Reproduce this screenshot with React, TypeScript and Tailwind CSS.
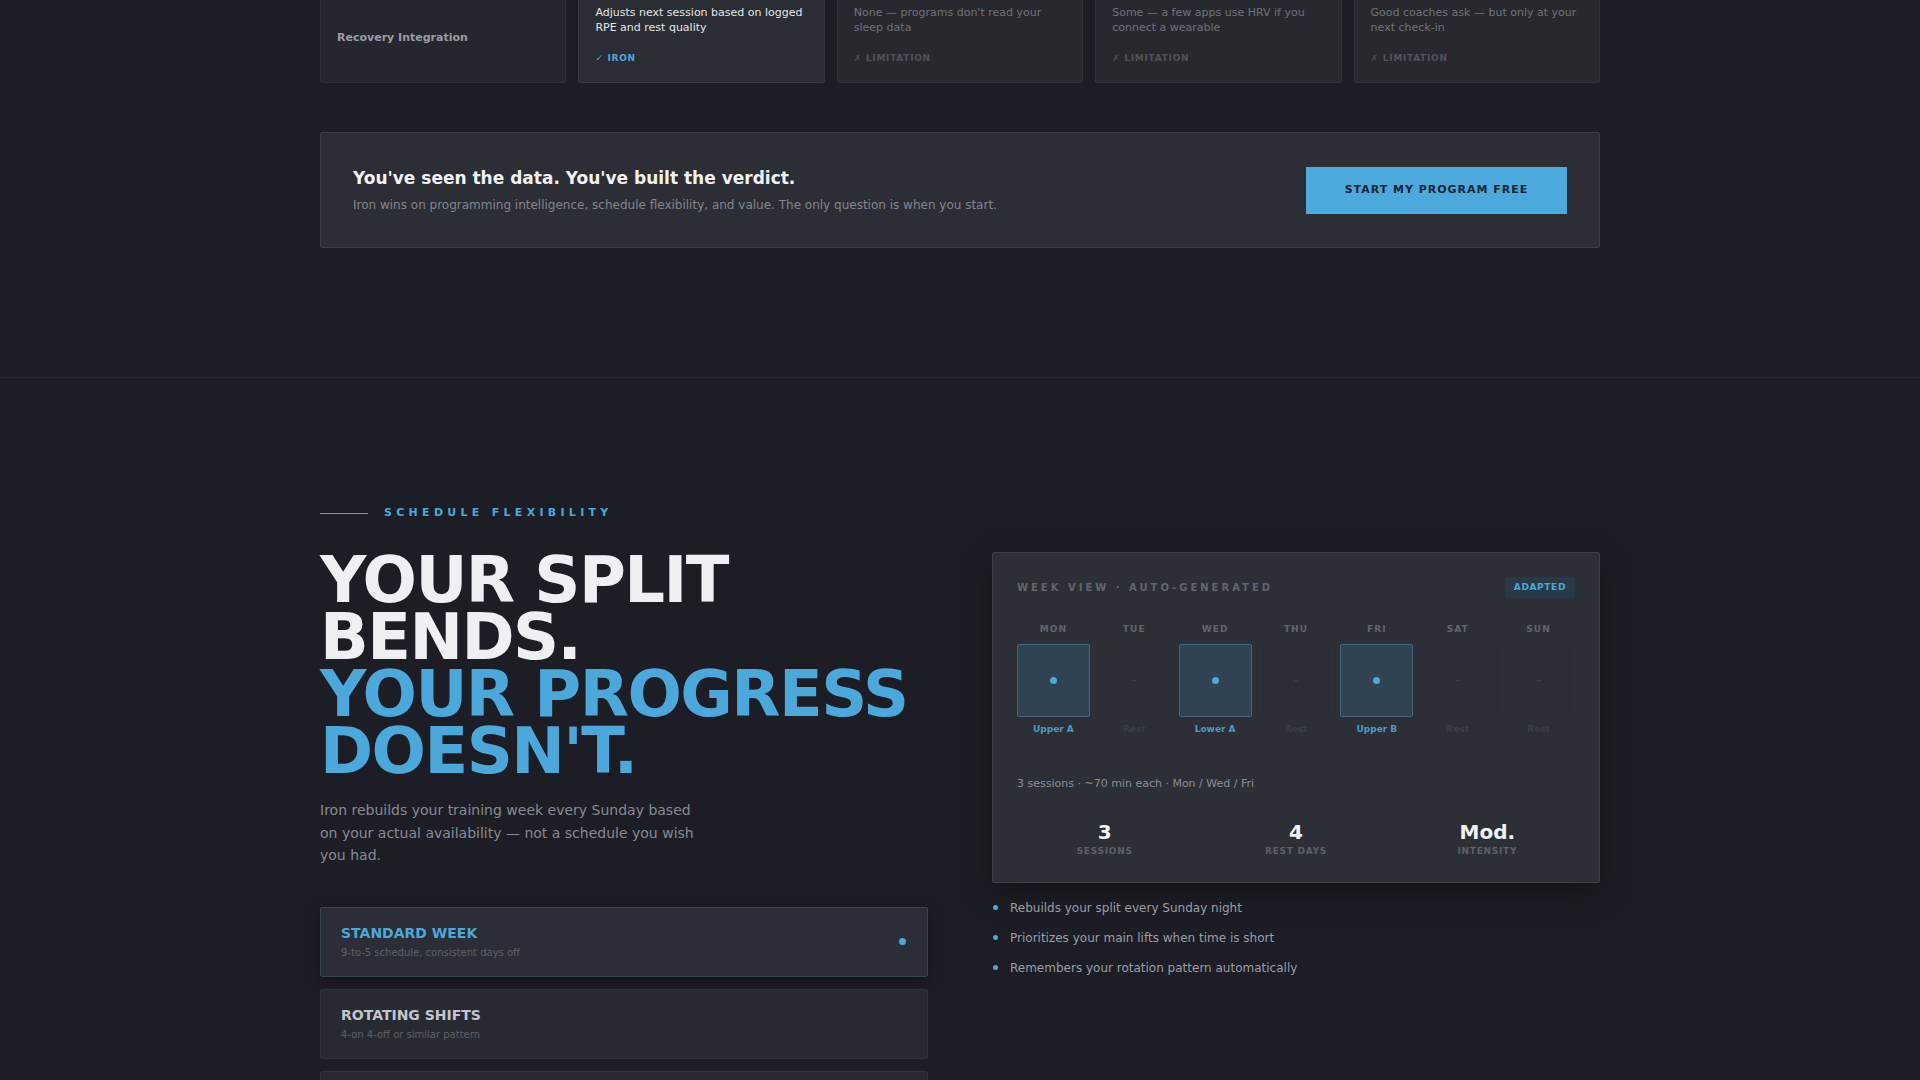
import React from "react";

const compare = [
  { text: "Adjusts next session based on logged RPE and rest quality", iron: true },
  { text: "None — programs don't read your sleep data", iron: false },
  { text: "Some — a few apps use HRV if you connect a wearable", iron: false },
  { text: "Good coaches ask — but only at your next check-in", iron: false },
];

const days = [
  { d: "MON", label: "Upper A", on: true },
  { d: "TUE", label: "Rest", on: false },
  { d: "WED", label: "Lower A", on: true },
  { d: "THU", label: "Rest", on: false },
  { d: "FRI", label: "Upper B", on: true },
  { d: "SAT", label: "Rest", on: false },
  { d: "SUN", label: "Rest", on: false },
];

const modes = [
  { title: "STANDARD WEEK", sub: "9-to-5 schedule, consistent days off", active: true },
  { title: "ROTATING SHIFTS", sub: "4-on 4-off or similar pattern", active: false },
  { title: "UNPREDICTABLE", sub: "Travel, on-call, or changing hours", active: false },
];

const perks = [
  "Rebuilds your split every Sunday night",
  "Prioritizes your main lifts when time is short",
  "Remembers your rotation pattern automatically",
];

export default function App() {
  return (
    <div className="min-h-screen bg-[#1d1e25] font-['DejaVu_Sans',sans-serif] text-[#e6e7ea] overflow-hidden">
      {/* comparison tail + verdict */}
      <div className="mx-auto w-[1280px]">
        <div className="-mt-3 grid grid-cols-5 gap-3">
          <div className="flex items-center rounded-[2px] border border-[#30333a] bg-[#25272e] px-4 pt-[6px]">
            <span className="text-[11px] font-bold text-[#9a9ca3]">Recovery Integration</span>
          </div>
          {compare.map((c, i) => (
            <div
              key={i}
              className={`rounded-[2px] border px-4 pt-4 pb-[17px] ${
                c.iron ? "border-[#363941] bg-[#2b2d34]" : "border-[#30333a] bg-[#27292f]"
              }`}
            >
              <p className={`text-[11px] leading-[15px] ${c.iron ? "text-[#e3e5e8]" : "text-[#6f727a]"}`}>{c.text}</p>
              <p
                className={`mt-[17px] text-[9px] font-bold tracking-[0.08em] leading-[13px] ${
                  c.iron ? "text-[#4ba8db]" : "text-[#50535b]"
                }`}
              >
                {c.iron ? "✓ IRON" : "✗ LIMITATION"}
              </p>
            </div>
          ))}
        </div>

        <div className="mt-[49px] flex items-center justify-between rounded-[2px] border border-[#3a3d45] bg-[#2c2e35] px-8 h-[116px]">
          <div className="pb-[1px]">
            <h3 className="text-[17px] font-bold leading-6 text-[#f1f2f4]">You've seen the data. You've built the verdict.</h3>
            <p className="mt-[7px] text-xs text-[#82858d]">
              Iron wins on programming intelligence, schedule flexibility, and value. The only question is when you start.
            </p>
          </div>
          <button className="h-[47px] w-[261px] bg-[#4ba9dc] text-[11px] font-bold tracking-[0.09em] text-[#172433]">
            START MY PROGRAM FREE
          </button>
        </div>
      </div>

      <div className="mt-[129px] border-t border-[#25272e]" />

      {/* schedule flexibility */}
      <section className="mx-auto w-[1280px] pt-[127px]">
        <div className="flex items-center gap-4">
          <span className="h-px w-12 bg-[#4ba8db]" />
          <span className="text-[11px] font-bold tracking-[0.39em] text-[#4ba8db] leading-4">SCHEDULE FLEXIBILITY</span>
        </div>

        <div className="mt-[31px] grid grid-cols-2 gap-16">
          <div>
            <h2 className="text-[64px] font-bold leading-[57px] tracking-[-0.024em]">
              <span className="block text-[#eef0f3]">YOUR SPLIT</span>
              <span className="block text-[#eef0f3]">BENDS.</span>
              <span className="block text-[#4ba8db]">YOUR PROGRESS</span>
              <span className="block text-[#4ba8db]">DOESN'T.</span>
            </h2>
            <p className="mt-[19px] max-w-[385px] text-sm leading-[22.5px] text-[#878a92]">
              Iron rebuilds your training week every Sunday based on your actual availability — not a schedule you wish you had.
            </p>

            <div className="mt-[40px] flex flex-col gap-3">
              {modes.map((m) => (
                <div
                  key={m.title}
                  className={`flex h-[70px] items-center justify-between rounded-[2px] border px-5 ${
                    m.active
                      ? "border-[#38444f] bg-[#2b2e36] shadow-[0_4px_14px_rgba(0,0,0,0.35)]"
                      : "border-[#30333a] bg-[#282a31]"
                  }`}
                >
                  <div>
                    <div className={`text-sm font-bold leading-5 ${m.active ? "text-[#4ba8db]" : "text-[#c3c5ca]"}`}>{m.title}</div>
                    <div className="mt-[3px] text-[10px] leading-[14px] text-[#5d6068]">{m.sub}</div>
                  </div>
                  {m.active && <span className="mr-[1px] h-[7px] w-[7px] rounded-full bg-[#4ba8db]" />}
                </div>
              ))}
            </div>
          </div>

          <div>
            <div className="rounded-[2px] border border-[#3c3f47] bg-[#2c2f36] px-6 pt-6 pb-[25px] shadow-[0_10px_30px_rgba(0,0,0,0.35)]">
              <div className="flex items-center justify-between h-[21px]">
                <span className="text-[10px] font-bold tracking-[0.3em] text-[#62656d]">WEEK VIEW · AUTO-GENERATED</span>
                <span className="rounded-[2px] bg-[#273a48] px-[9px] py-[4px] text-[9px] font-bold leading-[13px] tracking-[0.07em] text-[#4ba8db]">
                  ADAPTED
                </span>
              </div>

              <div className="mt-[25px] grid grid-cols-7 gap-2">
                {days.map((d) => (
                  <div key={d.d} className="flex flex-col items-center">
                    <span className="text-[9px] font-bold leading-3 tracking-[0.12em] text-[#62656d]">{d.d}</span>
                    <div
                      className={`mt-[9px] flex aspect-square w-full items-center justify-center rounded-[2px] border ${
                        d.on ? "border-[#46667d] bg-[#2f4353]" : "border-[#30323a] bg-[#2d2f36]"
                      }`}
                    >
                      {d.on ? (
                        <span className="h-[7px] w-[7px] rounded-full bg-[#4ba8db]" />
                      ) : (
                        <span className="h-px w-[4px] bg-[#3a3d45]" />
                      )}
                    </div>
                    <span
                      className={`mt-[6px] text-[9px] font-bold leading-3 ${d.on ? "text-[#4a9bc9]" : "text-[#3b3e46]"}`}
                    >
                      {d.label}
                    </span>
                  </div>
                ))}
              </div>

              <p className="mt-[41px] text-[11px] leading-4 text-[#8b8e96]">3 sessions · ~70 min each · Mon / Wed / Fri</p>

              <div className="mt-[28px] grid grid-cols-3 gap-4">
                {[
                  ["3", "SESSIONS"],
                  ["4", "REST DAYS"],
                  ["Mod.", "INTENSITY"],
                ].map(([v, l]) => (
                  <div key={l} className="flex flex-col items-center">
                    <span className="text-xl font-bold leading-6 text-[#f1f2f4]">{v}</span>
                    <span className="mt-[1px] text-[9px] font-bold leading-3 tracking-[0.08em] text-[#5d6068]">{l}</span>
                  </div>
                ))}
              </div>
            </div>

            <ul className="mt-4 flex flex-col gap-3">
              {perks.map((p) => (
                <li key={p} className="flex items-center gap-[12px] text-xs leading-[18px] text-[#9a9da5]">
                  <span className="ml-[1px] h-[5px] w-[5px] rounded-full bg-[#4ba8db]" />
                  {p}
                </li>
              ))}
            </ul>
          </div>
        </div>
      </section>
      <div className="h-40" />
    </div>
  );
}
